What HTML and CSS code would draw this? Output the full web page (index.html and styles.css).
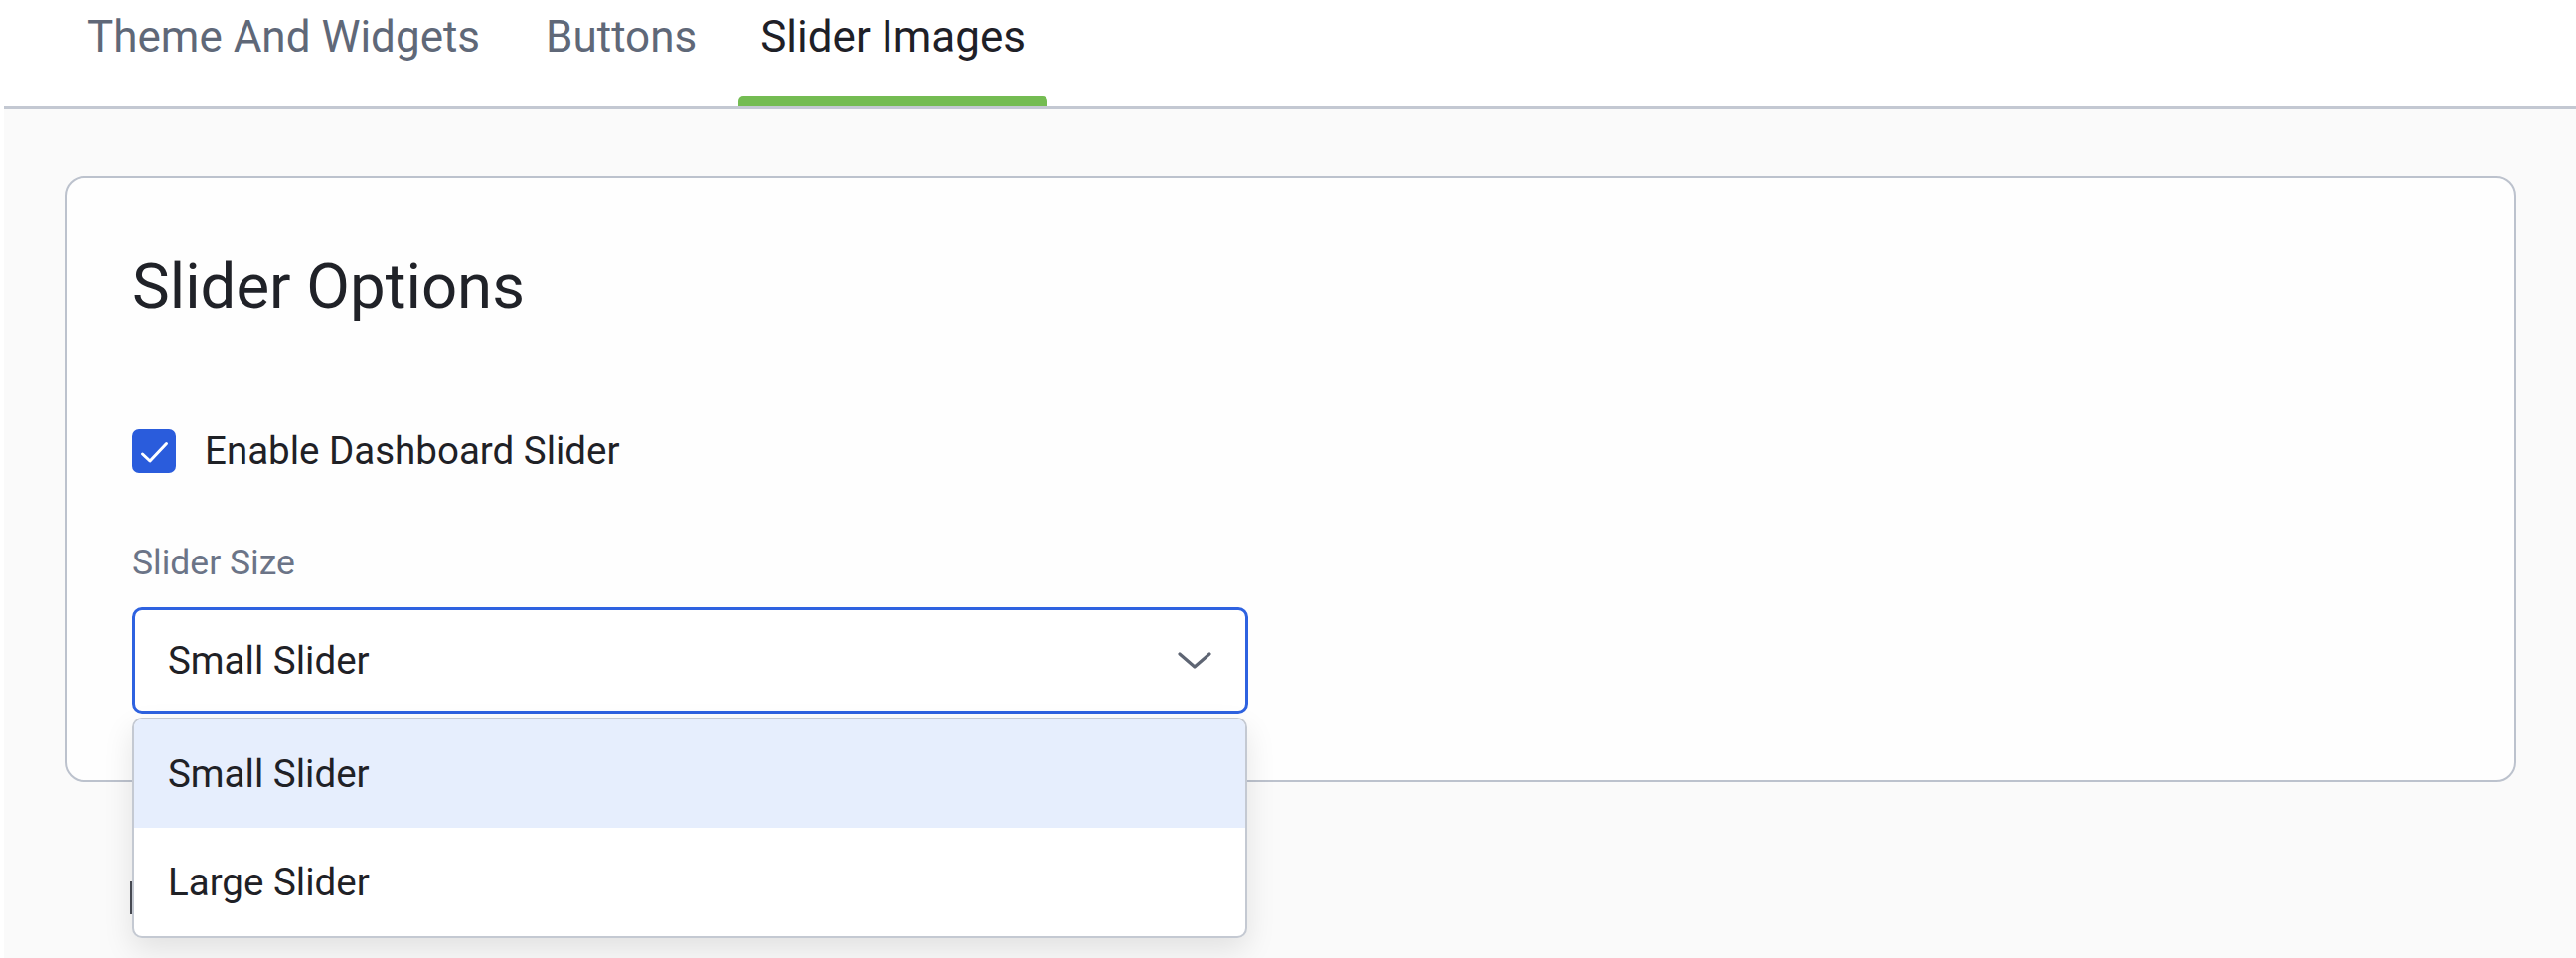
FILE: index.html
```html
<!DOCTYPE html>
<html lang="en">
<head>
<meta charset="utf-8">
<title>Slider Images</title>
<link rel="stylesheet" href="styles.css">
</head>
<body>
<div class="app">
  <nav class="tabs">
    <a class="tab">Theme And Widgets</a>
    <a class="tab">Buttons</a>
    <a class="tab active">Slider Images</a>
  </nav>
  <main class="content">
    <section class="card">
      <h2 class="card-title">Slider Options</h2>
      <label class="check-row">
        <span class="checkbox">
          <svg viewBox="0 0 44 44" width="44" height="44"><polyline points="10.5,25 18,32 34.5,14.5" fill="none" stroke="#fff" stroke-width="3" stroke-linecap="round" stroke-linejoin="round"/></svg>
        </span>
        <span class="check-label">Enable Dashboard Slider</span>
      </label>
      <div class="field-label">Slider Size</div>
      <div class="select-wrap">
        <div class="select">
          <span class="select-value">Small Slider</span>
          <svg class="chevron" viewBox="0 0 34 18" width="34" height="18"><polyline points="2,2 17,15 32,2" fill="none" stroke="#5e6573" stroke-width="3.2" stroke-linecap="round" stroke-linejoin="round"/></svg>
        </div>
        <ul class="menu">
          <li class="option highlighted">Small Slider</li>
          <li class="option">Large Slider</li>
        </ul>
      </div>
    </section>
    <div class="actions"><span class="action-edge"></span></div>
  </main>
</div>
</body>
</html>
```

FILE: styles.css
```css
* { box-sizing: border-box; }
html, body { margin: 0; padding: 0; background: #ffffff; }
body { font-family: Roboto, "Liberation Sans", sans-serif; color: #1f2126; }

.app {
  margin-left: 4px;
  min-height: 964px;
  display: flex;
  flex-direction: column;
}

.tabs {
  display: flex;
  gap: 18px;
  padding-left: 60px;
  height: 110px;
  border-bottom: 3px solid #c3c8d2;
  background: #ffffff;
}
.tab {
  position: relative;
  padding: 11px 24px 0;
  font-size: 44px;
  line-height: 52px;
  color: #5f6878;
  white-space: nowrap;
}
.tab.active { color: #1e2027; padding: 11px 22px 0; }
.tab.active::after {
  content: "";
  position: absolute;
  left: 0;
  right: 0;
  bottom: 0;
  height: 10px;
  background: #74bc52;
  border-radius: 5px 5px 0 0;
}

.content {
  flex: 1;
  background: #fafafa;
  padding: 67px 60px 0 61px;
}

.card {
  background: #fefefe;
  border: 2px solid #bcc2cd;
  border-radius: 20px;
  padding: 72px 66px 67px;
}
.card-title {
  margin: 0;
  font-size: 63.5px;
  line-height: 76px;
  font-weight: 400;
  color: #202228;
}

.check-row {
  display: flex;
  align-items: center;
  gap: 29px;
  margin-top: 105px;
}
.checkbox {
  width: 44px;
  height: 44px;
  border-radius: 7px;
  background: #2a5cdc;
  display: flex;
}
.check-label {
  font-size: 38.5px;
  line-height: 44px;
  color: #1f2126;
}

.field-label {
  margin-top: 69px;
  font-size: 35.5px;
  line-height: 42px;
  color: #6b7487;
}

.select-wrap {
  position: relative;
  margin-top: 24px;
  width: 1123px;
}
.select {
  height: 107px;
  border: 3px solid #2e62e0;
  border-radius: 10px;
  background: #ffffff;
  display: flex;
  align-items: center;
  justify-content: space-between;
  padding: 0 34px 0 33px;
}
.select-value {
  font-size: 38.5px;
  line-height: 44px;
  color: #1f2126;
}

.menu {
  position: absolute;
  z-index: 2;
  top: 111px;
  left: 0;
  width: 1122px;
  margin: 0;
  padding: 0;
  list-style: none;
  background: #ffffff;
  border: 2px solid #c4c9d2;
  border-radius: 10px;
  overflow: hidden;
  box-shadow: 0 12px 30px rgba(0, 0, 0, 0.10);
}
.option {
  height: 109px;
  display: flex;
  align-items: center;
  padding-left: 34px;
  font-size: 38.5px;
  line-height: 44px;
  color: #1f2126;
}
.option.highlighted { background: #e6eefd; }

.actions {
  margin-top: 100px;
  padding-left: 66px;
}
.action-edge {
  display: block;
  width: 60px;
  height: 33px;
  border-left: 2px solid #4a4d55;
}
```
